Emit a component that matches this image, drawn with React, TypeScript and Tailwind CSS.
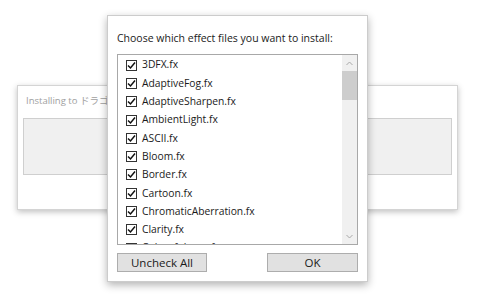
import React from "react"

const files = [
  "3DFX.fx",
  "AdaptiveFog.fx",
  "AdaptiveSharpen.fx",
  "AmbientLight.fx",
  "ASCII.fx",
  "Bloom.fx",
  "Border.fx",
  "Cartoon.fx",
  "ChromaticAberration.fx",
  "Clarity.fx",
  "Colourfulness.fx",
]

function CheckBox() {
  return (
    <div className="w-[11px] h-[11px] border border-[#333] bg-white flex items-center justify-center shrink-0">
      <svg width="9" height="9" viewBox="0 0 9 9">
        <path d="M1 4.5 L3.5 7 L8 1.5" fill="none" stroke="#111" strokeWidth="1.5" />
      </svg>
    </div>
  )
}

export default function App() {
  return (
    <div
      className="relative w-[480px] h-[301px] bg-white overflow-hidden text-[#1a1a1a]"
      style={{ fontFamily: '"Open Sans", "Noto Sans CJK JP", sans-serif' }}
    >
      {/* back window */}
      <div className="absolute left-[17px] top-[85px] w-[441px] h-[125px] bg-white border border-[#d4d4d4] shadow-[0_2px_6px_rgba(0,0,0,0.25)] px-[5px]">
        <div className="w-[85px] h-[32px] pl-[3px] pt-[9px] text-[9.5px] leading-[12px] text-[#a0a0a0] overflow-hidden whitespace-nowrap">
          Installing to ドラゴ
        </div>
        <div className="h-[57px] bg-[#f0f0f0] border border-[#cfcfcf]" />
      </div>

      {/* front dialog */}
      <div className="absolute left-[107px] top-[15px] w-[261px] h-[267px] bg-white border border-[#cccccc] shadow-[0_3px_8px_rgba(0,0,0,0.3)] flex flex-col px-[9px]">
        <div className="h-[38px] pt-[15px] text-[10.5px] leading-[14px] whitespace-nowrap">
          Choose which effect files you want to install:
        </div>
        <div className="h-[191px] border border-[#a8a8a8] flex overflow-hidden">
          <div className="flex-1 overflow-hidden pt-[1px] pl-[8px]">
            {files.map((f) => (
              <div key={f} className="h-[18.3px] flex items-center gap-[5px] text-[10.3px] whitespace-nowrap">
                <CheckBox />
                <span>{f}</span>
              </div>
            ))}
          </div>
          <div className="w-[15px] bg-[#f0f0f0] flex flex-col items-center">
            <div className="h-[16px] flex items-center justify-center">
              <svg width="7" height="5" viewBox="0 0 7 5">
                <path d="M0.5 4 L3.5 1 L6.5 4" fill="none" stroke="#a8a8a8" strokeWidth="1" />
              </svg>
            </div>
            <div className="w-[15px] h-[29px] bg-[#cdcdcd]" />
            <div className="flex-1" />
            <div className="h-[16px] flex items-center justify-center">
              <svg width="7" height="5" viewBox="0 0 7 5">
                <path d="M0.5 1 L3.5 4 L6.5 1" fill="none" stroke="#a8a8a8" strokeWidth="1" />
              </svg>
            </div>
          </div>
        </div>
        <div className="flex justify-between mt-[8px]">
          <button className="w-[90px] h-[19px] bg-[#e1e1e1] border border-[#adadad] text-[11.5px] leading-none flex items-center justify-center">
            Uncheck All
          </button>
          <button className="w-[91px] h-[19px] bg-[#e1e1e1] border border-[#adadad] text-[11.5px] leading-none flex items-center justify-center">
            OK
          </button>
        </div>
      </div>
    </div>
  )
}
